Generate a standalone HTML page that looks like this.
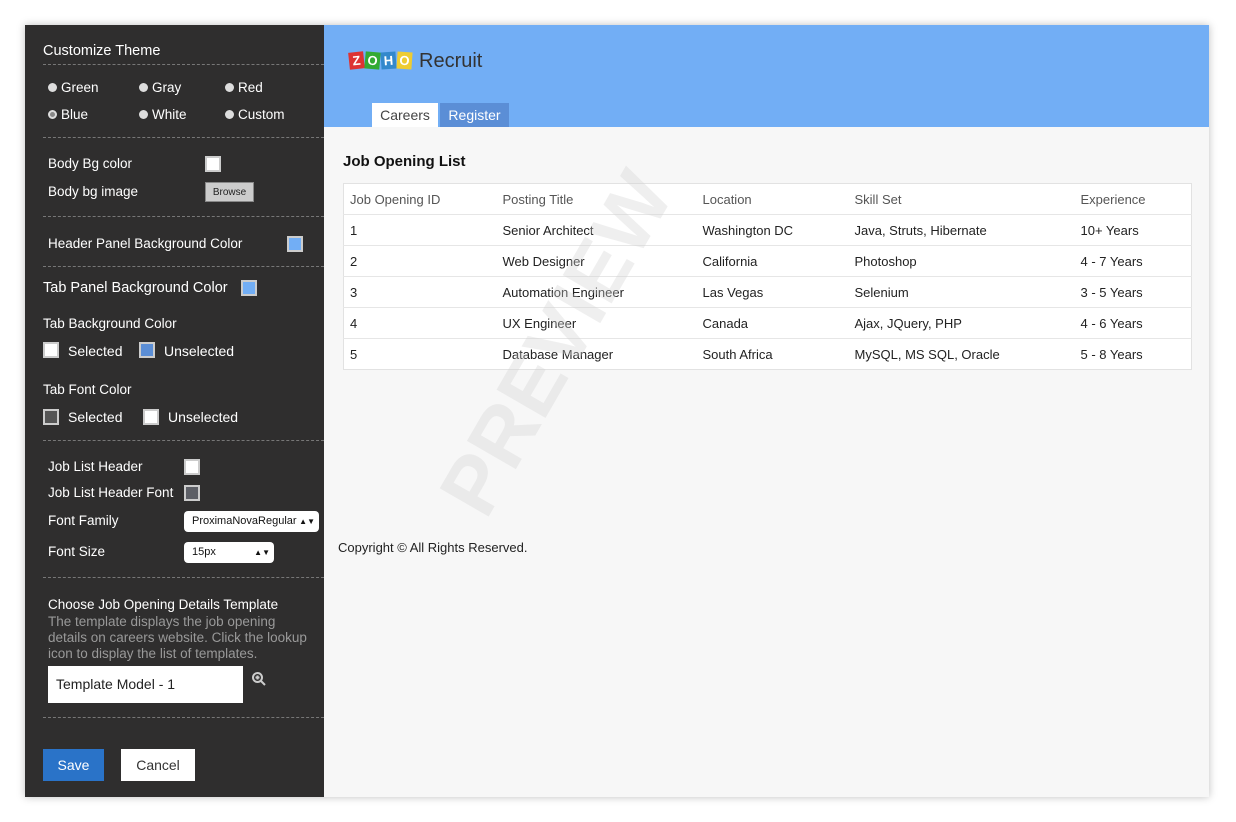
<!DOCTYPE html>
<html><head><style>
*{margin:0;padding:0;box-sizing:border-box}
body{width:1236px;height:822px;background:#fff;font-family:"Liberation Sans",sans-serif;position:relative;overflow:hidden}
.card{position:absolute;left:25px;top:25px;width:1184px;height:772px;background:#f7f7f7;box-shadow:0 0 8px rgba(0,0,0,.25)}
.side{position:absolute;left:25px;top:25px;width:299px;height:772px;background:#2f2e2e;color:#fff;font-size:13.5px}
.a{position:absolute;white-space:nowrap}
.hr{position:absolute;left:18px;width:281px;border-top:1px dashed #777}
.rd{display:inline-block;width:9px;height:9px;border-radius:50%;background:#ddd;margin-right:4px;vertical-align:0}
.sw{position:absolute;width:16px;height:16px;border:2px solid #ccc}
.hdr{position:absolute;left:324px;top:25px;width:885px;height:102px;background:#72aef5}
.tab{position:absolute;top:103px;height:24px;font-size:14px;line-height:24px;text-align:center}
table{position:absolute;left:343px;top:183px;width:849px;border-collapse:collapse;background:#fff;border:1px solid #e2e2e2;font-size:13px;color:#222}
td{height:31px;border-top:1px solid #e6e6e6;padding-left:6px}
tr:first-child td{color:#555;font-size:13px}
.lg{display:inline-block;width:15px;height:17px;color:#fff;text-align:center;line-height:17px;font-size:13px;font-weight:bold;margin-right:1px}
</style></head><body>
<div class="card"></div>
<div class="side">
<div class="a" style="left:18px;top:18px;font-size:14.5px">Customize Theme</div>
<div class="hr" style="top:39px"></div>
<div class="a" style="left:23px;top:55px"><span class="rd"></span>Green</div>
<div class="a" style="left:114px;top:55px"><span class="rd"></span>Gray</div>
<div class="a" style="left:200px;top:55px"><span class="rd"></span>Red</div>
<div class="a" style="left:23px;top:82px"><span class="rd" style="border:2px solid #ddd;background:#888"></span>Blue</div>
<div class="a" style="left:114px;top:82px"><span class="rd"></span>White</div>
<div class="a" style="left:200px;top:82px"><span class="rd"></span>Custom</div>
<div class="hr" style="top:112px"></div>
<div class="a" style="left:23px;top:131px">Body Bg color</div>
<div class="sw" style="left:180px;top:131px;background:#fff"></div>
<div class="a" style="left:23px;top:159px">Body bg image</div>
<div class="a" style="left:180px;top:157px;width:49px;height:20px;background:#ccc;border:1px solid #888;color:#222;font-size:10px;text-align:center;line-height:20px">Browse</div>
<div class="hr" style="top:191px"></div>
<div class="a" style="left:23px;top:211px">Header Panel Background Color</div>
<div class="sw" style="left:262px;top:211px;background:#72aef5"></div>
<div class="hr" style="top:241px"></div>
<div class="a" style="left:18px;top:255px;font-size:14.5px">Tab Panel Background Color</div>
<div class="sw" style="left:216px;top:255px;background:#72aef5"></div>
<div class="a" style="left:18px;top:291px">Tab Background Color</div>
<div class="sw" style="left:18px;top:317px;background:#fff"></div>
<div class="a" style="left:43px;top:318px;font-size:14px">Selected</div>
<div class="sw" style="left:114px;top:317px;background:#5b8ed6"></div>
<div class="a" style="left:139px;top:318px;font-size:14px">Unselected</div>
<div class="a" style="left:18px;top:357px">Tab Font Color</div>
<div class="sw" style="left:18px;top:384px;background:#555"></div>
<div class="a" style="left:43px;top:384px;font-size:14px">Selected</div>
<div class="sw" style="left:118px;top:384px;background:#fff"></div>
<div class="a" style="left:143px;top:384px;font-size:14px">Unselected</div>
<div class="hr" style="top:415px"></div>
<div class="a" style="left:23px;top:434px">Job List Header</div>
<div class="sw" style="left:159px;top:434px;background:#fff"></div>
<div class="a" style="left:23px;top:460px">Job List Header Font</div>
<div class="sw" style="left:159px;top:460px;background:#5d5f66"></div>
<div class="a" style="left:23px;top:488px">Font Family</div>
<div class="a" style="left:159px;top:486px;width:135px;height:21px;background:#fff;border-radius:4px;color:#111;font-size:11px;line-height:21px;padding-left:8px">ProximaNovaRegular<span style="position:absolute;right:4px;font-size:8px">▲▼</span></div>
<div class="a" style="left:23px;top:519px">Font Size</div>
<div class="a" style="left:159px;top:517px;width:90px;height:21px;background:#fff;border-radius:4px;color:#111;font-size:11px;line-height:21px;padding-left:8px">15px<span style="position:absolute;right:4px;font-size:8px">▲▼</span></div>
<div class="hr" style="top:552px"></div>
<div class="a" style="left:23px;top:572px">Choose Job Opening Details Template</div>
<div class="a" style="left:23px;top:589px;color:#999;line-height:16px">The template displays the job opening<br>details on careers website. Click the lookup<br>icon to display the list of templates.</div>
<div class="a" style="left:23px;top:641px;width:195px;height:37px;background:#fff;color:#222;font-size:14px;line-height:37px;padding-left:8px">Template Model - 1</div>
<svg class="a" style="left:226px;top:646px" width="16" height="16" viewBox="0 0 16 16"><circle cx="6.5" cy="6.5" r="4.5" fill="none" stroke="#ccc" stroke-width="2"/><path d="M10 10l4 4M4.5 6.5h4M6.5 4.5v4" stroke="#ccc" stroke-width="2"/></svg>
<div class="hr" style="top:692px"></div>
<div class="a" style="left:18px;top:724px;width:61px;height:32px;background:#2a73c8;text-align:center;line-height:32px;font-size:14px">Save</div>
<div class="a" style="left:96px;top:724px;width:74px;height:32px;background:#fff;color:#333;text-align:center;line-height:32px;font-size:14px">Cancel</div>
</div>
<div class="hdr">
<div class="a" style="left:25px;top:27px"><span class="lg" style="background:#d33;transform:rotate(-6deg)">Z</span><span class="lg" style="background:#3a3;transform:rotate(5deg)">O</span><span class="lg" style="background:#38c;transform:rotate(-4deg)">H</span><span class="lg" style="background:#ec3;transform:rotate(4deg)">O</span></div>
<div class="a" style="left:95px;top:25px;font-size:20px;color:#333">Recruit</div>
</div>
<div class="tab" style="left:372px;width:66px;background:#fff;color:#444">Careers</div>
<div class="tab" style="left:440px;width:69px;background:#5b8ed6;color:#fff">Register</div>
<div class="a" style="left:343px;top:153px;font-size:15px;font-weight:bold;color:#111">Job Opening List</div>
<table>
<tr><td style="width:153px;border:0">Job Opening ID</td><td style="width:200px;border:0">Posting Title</td><td style="width:152px;border:0">Location</td><td style="width:226px;border:0">Skill Set</td><td style="border:0">Experience</td></tr>
<tr><td>1</td><td>Senior Architect</td><td>Washington DC</td><td>Java, Struts, Hibernate</td><td>10+ Years</td></tr>
<tr><td>2</td><td>Web Designer</td><td>California</td><td>Photoshop</td><td>4 - 7 Years</td></tr>
<tr><td>3</td><td>Automation Engineer</td><td>Las Vegas</td><td>Selenium</td><td>3 - 5 Years</td></tr>
<tr><td>4</td><td>UX Engineer</td><td>Canada</td><td>Ajax, JQuery, PHP</td><td>4 - 6 Years</td></tr>
<tr><td>5</td><td>Database Manager</td><td>South Africa</td><td>MySQL, MS SQL, Oracle</td><td>5 - 8 Years</td></tr>
</table>
<div class="a" style="left:357px;top:294px;font-size:82px;font-weight:bold;color:rgba(210,210,210,.35);transform:rotate(-60deg);transform-origin:center;width:400px;text-align:center;line-height:100px">PREVIEW</div>
<div class="a" style="left:338px;top:540px;font-size:13px;color:#222">Copyright © All Rights Reserved.</div>
</body></html>
